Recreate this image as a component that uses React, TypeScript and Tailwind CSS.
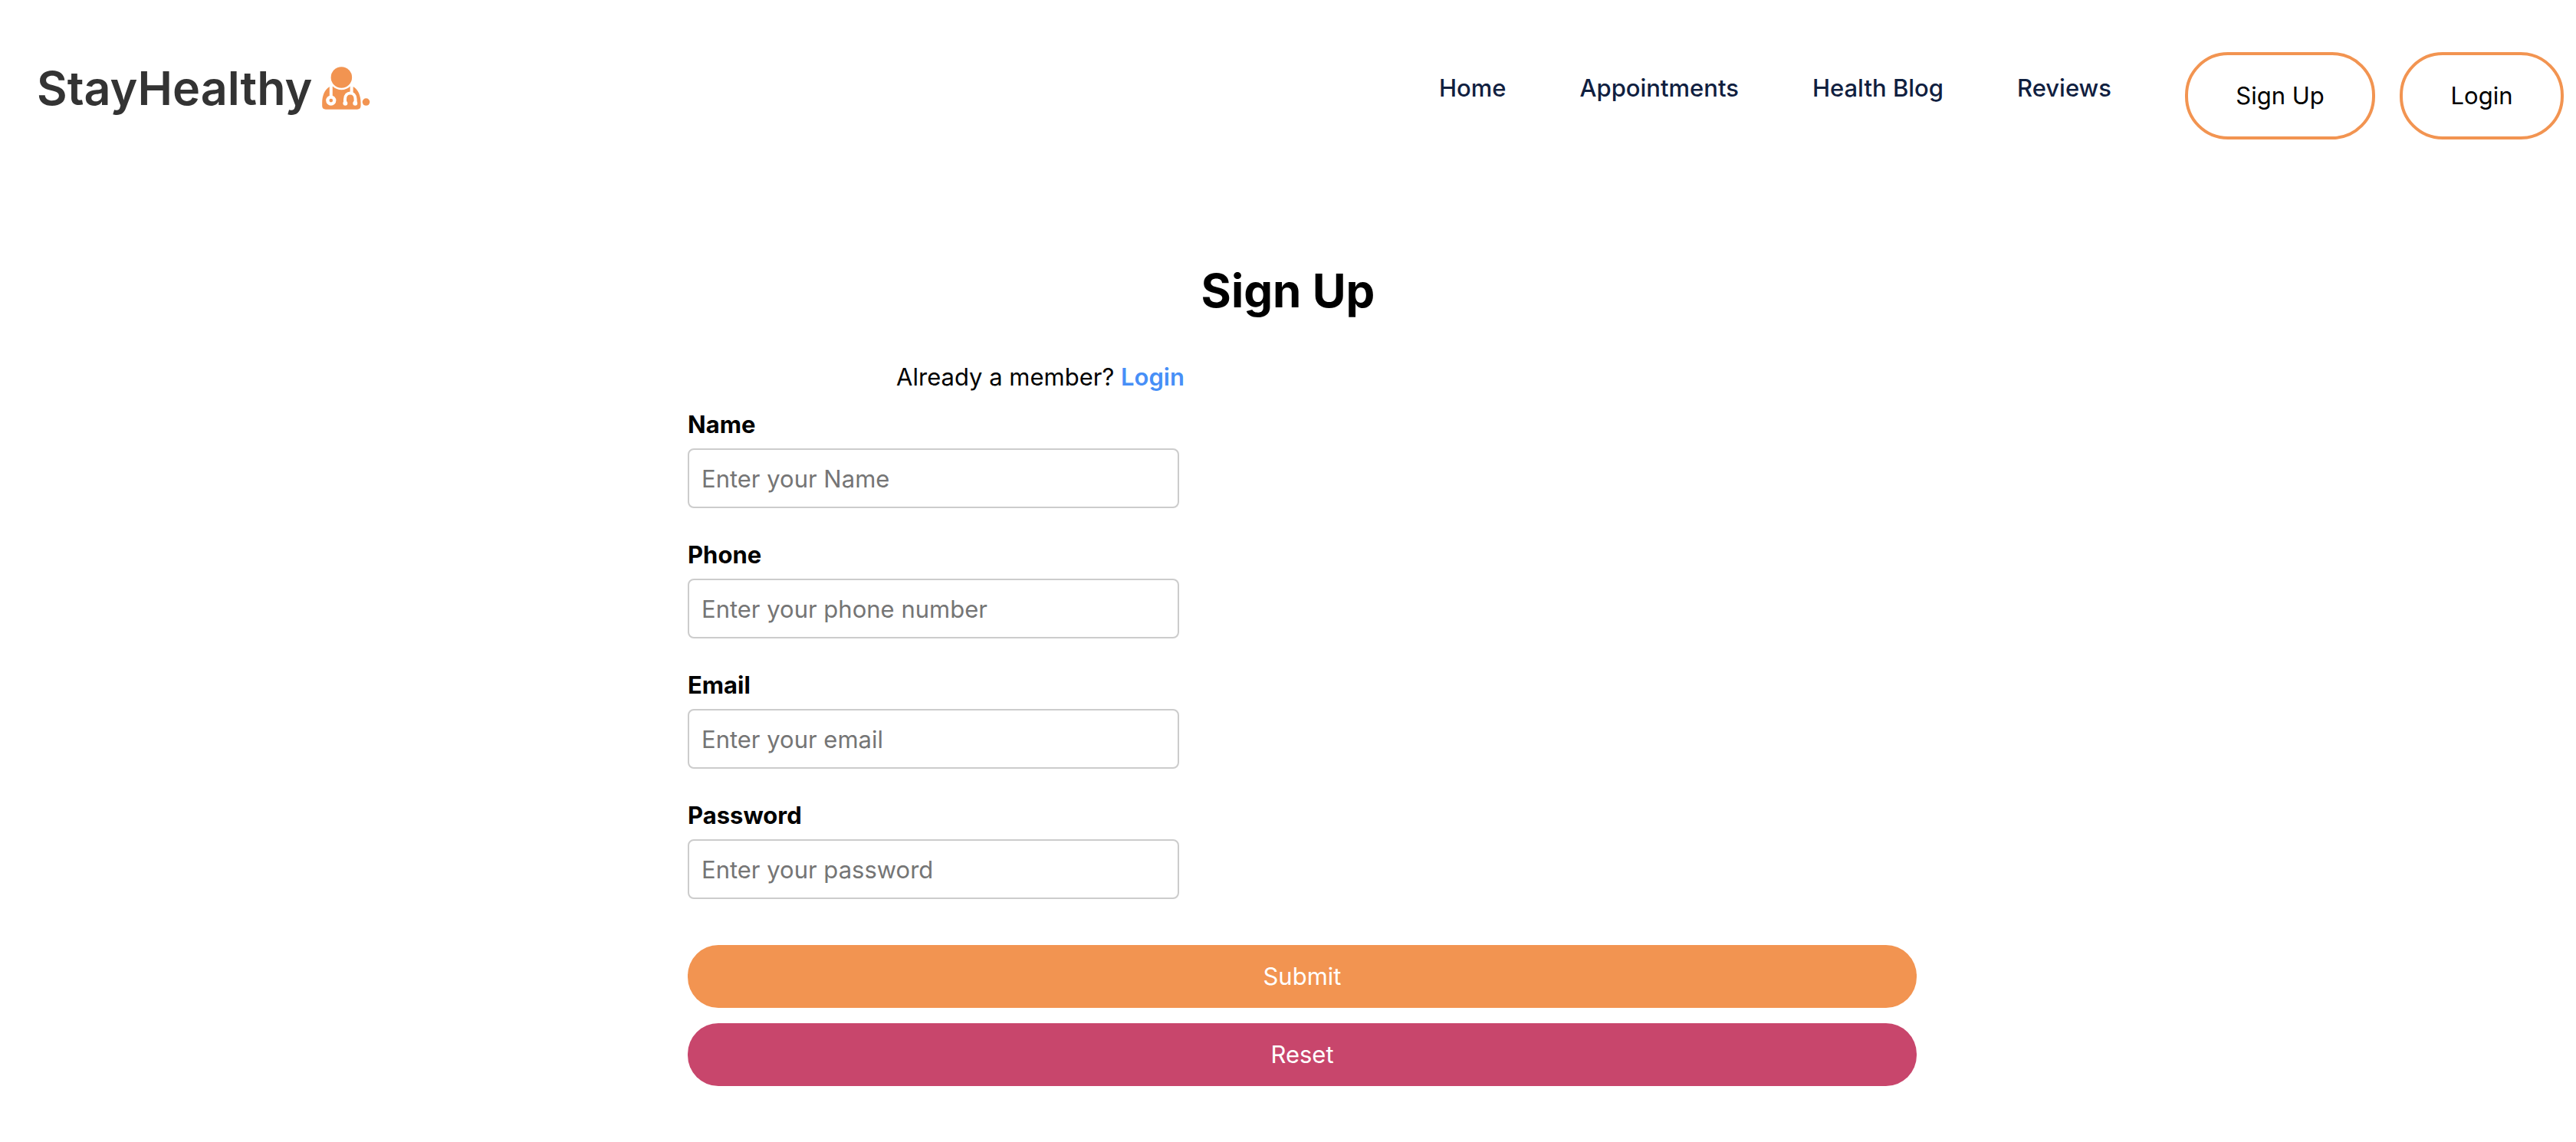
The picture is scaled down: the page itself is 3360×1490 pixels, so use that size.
type Field = { id: string; label: string; type: string; placeholder: string };

const links = ['Home', 'Appointments', 'Health Blog', 'Reviews'];

const fields: Field[] = [
  { id: 'name', label: 'Name', type: 'text', placeholder: 'Enter your Name' },
  { id: 'phone', label: 'Phone', type: 'tel', placeholder: 'Enter your phone number' },
  { id: 'email', label: 'Email', type: 'email', placeholder: 'Enter your email' },
  { id: 'password', label: 'Password', type: 'password', placeholder: 'Enter your password' },
];

function DoctorIcon() {
  return (
    <svg viewBox="64 48 189 169" className="h-14 w-[63px]" aria-hidden="true">
      <g fill="#f29451">
        <circle cx="140" cy="90" r="41.5" />
        <path d="M93 127 C74 138 64 162 64 190 V202 Q64 216 78 216 H202 Q216 216 216 202 V190 C216 162 206 138 187 127 L174 126 A50 50 0 0 1 106 126 Z" />
        <circle cx="237" cy="187" r="14.5" />
      </g>
      <g fill="none" stroke="#fff" strokeWidth="12">
        <path d="M99 120 V166" />
        <path d="M180 120 V154" />
        <path d="M154 192 V176 C154 144 195 144 195 176 V192" strokeLinecap="round" />
      </g>
      <g fill="#fff">
        <circle cx="99" cy="181" r="20" />
        <circle cx="155" cy="192" r="9" />
        <circle cx="194" cy="192" r="9" />
      </g>
      <circle cx="99" cy="181" r="7" fill="#f29451" />
    </svg>
  );
}

function Header() {
  return (
    <header className="flex items-center justify-between pt-12 pr-4 pl-12">
      <a href="#" className="flex items-center gap-3 text-[61px] leading-[80px] font-semibold text-[#333333]">
        StayHealthy
        <DoctorIcon />
      </a>
      <nav className="flex items-center gap-24">
        {links.map((link) => (
          <a key={link} href="#" className="font-medium text-[#10203f]">
            {link}
          </a>
        ))}
        <div className="mt-5 flex gap-8">
          <button type="button" className="h-[114px] w-[248px] rounded-[56px] border-4 border-[#f29451]">
            Sign Up
          </button>
          <button type="button" className="h-[114px] w-[214px] rounded-[56px] border-4 border-[#f29451]">
            Login
          </button>
        </div>
      </nav>
    </header>
  );
}

export default function App() {
  return (
    <div className="bg-white font-['Inter',sans-serif] text-[31px] leading-10 text-black">
      <Header />
      <main className="pt-[157px]">
        <h1 className="text-center text-[60px] leading-[80px] font-bold">Sign Up</h1>
        <div className="pt-[53px] pl-[37px]">
          <form className="mx-auto w-full max-w-[1603px]">
            <p className="mb-[22px] max-w-[920px] text-center">
              Already a member?{' '}
              <a href="#" className="font-semibold text-[#478ff7]">
                Login
              </a>
            </p>
            <div className="flex flex-col gap-[41px]">
              {fields.map((field) => (
                <div key={field.id} className="flex flex-col gap-[11px]">
                  <label htmlFor={field.id} className="font-bold">
                    {field.label}
                  </label>
                  <input
                    id={field.id}
                    type={field.type}
                    placeholder={field.placeholder}
                    className="h-[78px] w-full max-w-[641px] rounded-lg border-2 border-[#cccccc] px-4 placeholder:text-[#757575]"
                  />
                </div>
              ))}
            </div>
            <div className="mt-[60px] flex flex-col gap-5 text-white">
              <button type="submit" className="h-[82px] rounded-[40px] bg-[#f29451]">
                Submit
              </button>
              <button type="reset" className="h-[82px] rounded-[40px] bg-[#c8466c]">
                Reset
              </button>
            </div>
          </form>
        </div>
      </main>
    </div>
  );
}
